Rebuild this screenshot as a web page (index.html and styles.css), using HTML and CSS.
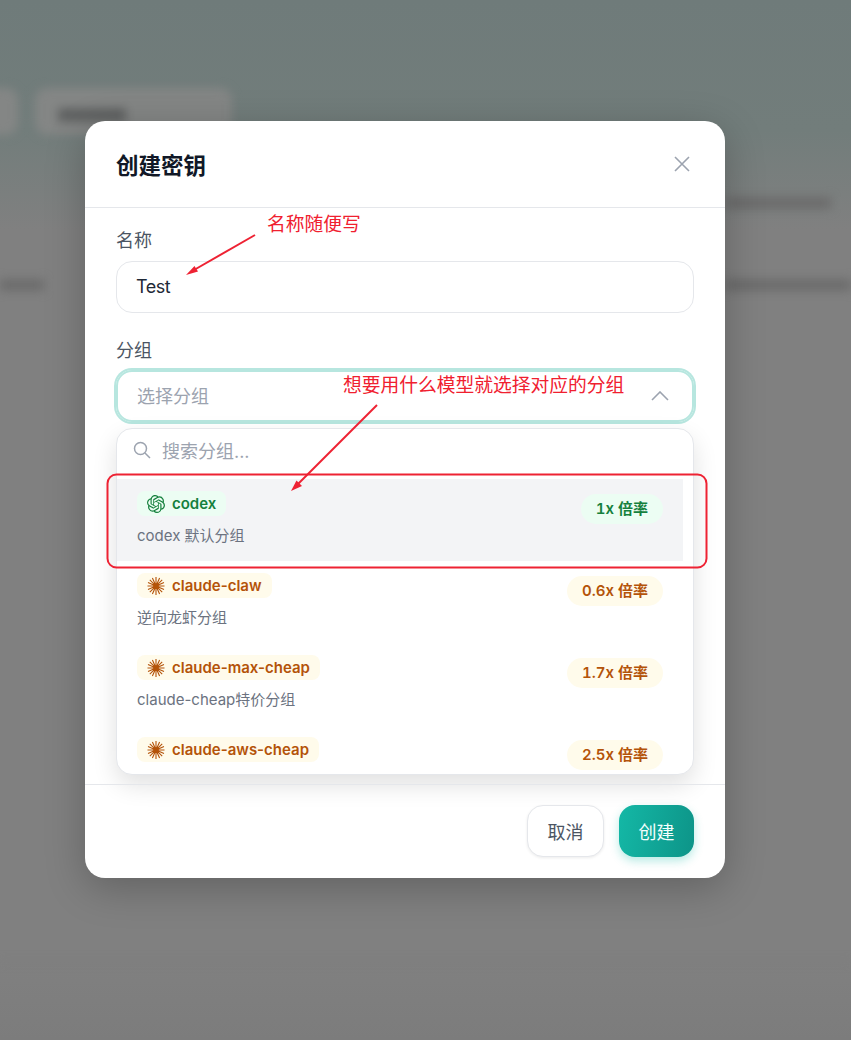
FILE: index.html
```html
<!DOCTYPE html>
<html>
	<head>
		<meta charset="utf-8" />
		<title>创建密钥</title>
		<link rel="stylesheet" href="styles.css">
	</head>
	<body>
		<div class="backdrop">
			<div class="back-toolbar">
				<div class="back-pill back-pill-small"></div>
				<div class="back-pill back-pill-large"><span class="back-text"></span></div>
			</div>
			<div class="back-row back-row-one"><span class="back-line"></span></div>
			<div class="back-row back-row-two"><span class="back-line back-line-left"></span><span class="back-line back-line-right"></span></div>
			<div class="back-foot"></div>
		</div>

		<div class="overlay">
			<div class="modal">
				<div class="modal-head">
					<h2 class="modal-title">创建密钥</h2>
					<svg class="close-icon" viewBox="0 0 18 18"><path d="M2 2l14 14M16 2L2 16"/></svg>
				</div>
				<div class="modal-body">
					<div class="label label-first">名称</div>
					<div class="input">Test</div>
					<div class="label label-second">分组</div>
					<div class="select">
						<span>选择分组</span>
						<svg class="chevron" viewBox="0 0 18 10"><path d="M1 9l8-8 8 8"/></svg>
					</div>
					<div class="dropdown">
						<div class="search">
							<svg class="search-icon" viewBox="0 0 18 18"><circle cx="7.5" cy="7.5" r="6"/><path d="M12 12l5 5"/></svg>
							<span>搜索分组...</span>
						</div>
						<div class="item item-active">
							<div class="item-row">
								<span class="badge badge-green">
									<svg class="badge-icon" viewBox="0 0 24 24"><path fill="currentColor" d="M22.2819 9.8211a5.9847 5.9847 0 0 0-.5157-4.9108 6.0462 6.0462 0 0 0-6.5098-2.9A6.0651 6.0651 0 0 0 4.9807 4.1818a5.9847 5.9847 0 0 0-3.9977 2.9 6.0462 6.0462 0 0 0 .7427 7.0966 5.98 5.98 0 0 0 .511 4.9107 6.051 6.051 0 0 0 6.5146 2.9001A5.9847 5.9847 0 0 0 13.2599 24a6.0557 6.0557 0 0 0 5.7718-4.2058 5.9894 5.9894 0 0 0 3.9977-2.9001 6.0557 6.0557 0 0 0-.7475-7.0729zm-9.022 12.6081a4.4755 4.4755 0 0 1-2.8764-1.0408l.1419-.0804 4.7783-2.7582a.7948.7948 0 0 0 .3927-.6813v-6.7369l2.02 1.1686a.071.071 0 0 1 .038.052v5.5826a4.504 4.504 0 0 1-4.4945 4.4944zm-9.6607-4.1254a4.4708 4.4708 0 0 1-.5346-3.0137l.142.0852 4.783 2.7582a.7712.7712 0 0 0 .7806 0l5.8428-3.3685v2.3324a.0804.0804 0 0 1-.0332.0615L9.74 19.9502a4.4992 4.4992 0 0 1-6.1408-1.6464zM2.3408 7.8956a4.485 4.485 0 0 1 2.3655-1.9728V11.6a.7664.7664 0 0 0 .3879.6765l5.8144 3.3543-2.0201 1.1685a.0757.0757 0 0 1-.071 0l-4.8303-2.7865A4.504 4.504 0 0 1 2.3408 7.872zm16.5963 3.8558L13.1038 8.364 15.1192 7.2a.0757.0757 0 0 1 .071 0l4.8303 2.7913a4.4944 4.4944 0 0 1-.6765 8.1042v-5.6772a.79.79 0 0 0-.407-.667zm2.0107-3.0231l-.142-.0852-4.7735-2.7818a.7759.7759 0 0 0-.7854 0L9.409 9.2297V6.8974a.0662.0662 0 0 1 .0284-.0615l4.8303-2.7866a4.4992 4.4992 0 0 1 6.6802 4.66zM8.3065 12.863l-2.02-1.1638a.0804.0804 0 0 1-.038-.0567V6.0742a4.4992 4.4992 0 0 1 7.3757-3.4537l-.142.0805L8.704 5.459a.7948.7948 0 0 0-.3927.6813zm1.0976-2.3654l2.602-1.4998 2.6069 1.4998v2.9994l-2.5974 1.4997-2.6067-1.4997Z"/></svg>
									codex
								</span>
								<span class="rate rate-green">1x 倍率</span>
							</div>
							<div class="desc">codex 默认分组</div>
						</div>
						<div class="item">
							<div class="item-row">
								<span class="badge badge-orange">
									<svg class="badge-icon burst" viewBox="0 0 18 18"><path d="M9 0v18M0.500 9h17M2.800 2.800l12.400 12.400M15.200 2.800L2.800 15.200M5.400 1l7.200 16M12.600 1L5.400 17M1 5.600l16 6.800M17 5.600L1 12.400"/></svg>
									claude-claw
								</span>
								<span class="rate rate-orange">0.6x 倍率</span>
							</div>
							<div class="desc">逆向龙虾分组</div>
						</div>
						<div class="item">
							<div class="item-row">
								<span class="badge badge-orange">
									<svg class="badge-icon burst" viewBox="0 0 18 18"><path d="M9 0v18M0.500 9h17M2.800 2.800l12.400 12.400M15.200 2.800L2.800 15.200M5.400 1l7.200 16M12.600 1L5.400 17M1 5.600l16 6.800M17 5.600L1 12.400"/></svg>
									claude-max-cheap
								</span>
								<span class="rate rate-orange">1.7x 倍率</span>
							</div>
							<div class="desc">claude-cheap特价分组</div>
						</div>
						<div class="item">
							<div class="item-row">
								<span class="badge badge-orange">
									<svg class="badge-icon burst" viewBox="0 0 18 18"><path d="M9 0v18M0.500 9h17M2.800 2.800l12.400 12.400M15.200 2.800L2.800 15.200M5.400 1l7.200 16M12.600 1L5.400 17M1 5.600l16 6.800M17 5.600L1 12.400"/></svg>
									claude-aws-cheap
								</span>
								<span class="rate rate-orange">2.5x 倍率</span>
							</div>
						</div>
					</div>
				</div>
				<div class="modal-foot">
					<div class="btn btn-cancel">取消</div>
					<div class="btn btn-create">创建</div>
				</div>
			</div>
		</div>

		<!-- red marks drawn on top of the screenshot -->
		<svg class="marks" viewBox="0 0 851 1040">
			<rect class="mark-box" x="107.5" y="474.5" width="599" height="93" rx="9"/>
			<path class="mark-line" d="M255 235L194 270"/>
			<path class="mark-head" d="M186 275l12-3.500-3.500-5.500z"/>
			<path class="mark-line" d="M377 405L298 484"/>
			<path class="mark-head" d="M291 491l11-5-5.500-5.500z"/>
		</svg>
		<div class="note note-name">名称随便写</div>
		<div class="note note-group">想要用什么模型就选择对应的分组</div>
	</body>
</html>
```

FILE: styles.css
```css
*{
	box-sizing: border-box;
}
html,body{
	margin:0;
	height:100%;
}
body{
	position: relative;
	width:851px;
	height:1040px;
	overflow: hidden;
	background: linear-gradient(#6f7b7a 0,#727d7b 130px,#808080 230px,#808080 960px,#7c7c7c 1040px);
	font-family: "Inter","Noto Sans CJK SC",sans-serif;
	color:#111827;
}

/* blurred page behind the dialog */
.backdrop{
	position: absolute;
	top:0;
	left:0;
	width:851px;
	height:1040px;
	filter: blur(5px);
}
.back-toolbar{
	display: flex;
	gap:17px;
	padding-top:88px;
	margin-left:-20px;
}
.back-pill{
	height:47px;
	border-radius:12px;
	background-color:#848685;
}
.back-pill-small{
	width:38px;
}
.back-pill-large{
	width:197px;
	padding:20px 0 0 23px;
}
.back-text{
	display:block;
	width:68px;
	height:14px;
	background-color:#606262;
}
.back-row{
	display: flex;
	justify-content: space-between;
}
.back-row-one{
	justify-content: flex-end;
	padding:62px 20px 0 0;
}
.back-row-two{
	padding-top:70px;
}
.back-line{
	display:block;
	width:105px;
	height:12px;
	background-color:#6c6c6c;
}
.back-line-left{
	width:44px;
}
.back-line-right{
	width:126px;
}
.back-foot{
	height:1px;
	margin-top:670px;
	background-color:#767676;
}

/* dialog */
.overlay{
	position: absolute;
	top:0;
	left:0;
	width:851px;
	padding:121px 0 0 85px;
}
.modal{
	width:640px;
	height:757px;
	background-color:#fff;
	border-radius:20px;
	box-shadow: 0 10px 40px rgba(0,0,0,0.24);
	display: flex;
	flex-direction: column;
}
.modal-head{
	height:87px;
	padding:0 34px 0 31px;
	border-bottom:1px solid #e5e7eb;
	display: flex;
	align-items: center;
	justify-content: space-between;
}
.modal-title{
	margin:0;
	font-size:22.5px;
	font-weight:700;
	color:#111827;
}
.close-icon{
	width:18px;
	height:18px;
	fill:none;
	stroke:#9ca3af;
	stroke-width:1.6;
}
.modal-body{
	flex:1;
	padding:20px 31px 0;
}
.label{
	height:26px;
	line-height:26px;
	font-size:18px;
	color:#4b5563;
}
.label-first{
	margin-bottom:7px;
}
.label-second{
	margin-top:25px;
	margin-bottom:6px;
}
.input{
	height:52px;
	padding:0 19px;
	line-height:50px;
	font-size:18px;
	letter-spacing:-0.5px;
	color:#1f2937;
	border:1px solid #e5e7eb;
	border-radius:16px;
}
.select{
	height:52px;
	padding:0 23px 2px 19px;
	font-size:18px;
	color:#9ca3af;
	border:2px solid #b7e6df;
	border-radius:16px;
	box-shadow: 0 0 0 2px #b7e6df;
	display: flex;
	align-items: center;
	justify-content: space-between;
}
.chevron{
	width:18px;
	height:10px;
	margin-top:2px;
	fill:none;
	stroke:#9ca3af;
	stroke-width:1.6;
}
.dropdown{
	height:347px;
	margin-top:6px;
	border:1px solid #e5e7eb;
	border-radius:16px;
	background-color:#fff;
	box-shadow: 0 10px 24px rgba(0,0,0,0.12);
	overflow: hidden;
}
.search{
	height:50px;
	padding:0 16px 8px;
	display: flex;
	align-items: center;
	gap:11px;
	font-size:18px;
	color:#9ca3af;
}
.search-icon{
	width:18px;
	height:18px;
	fill:none;
	stroke:#9ca3af;
	stroke-width:1.5;
}
.item{
	width:566px;
	height:82px;
	padding:12px 20px 0;
}
.item-active{
	background-color:#f3f4f6;
}
.item-row{
	display: flex;
	justify-content: space-between;
	align-items: flex-start;
}
.badge{
	height:25px;
	padding:0 10px;
	border-radius:8px;
	display: flex;
	align-items: center;
	gap:7px;
	font-size:15px;
	font-weight:600;
}
.badge-green{
	background-color:#ecfdf3;
	color:#15803d;
}
.badge-orange{
	background-color:#fffbeb;
	color:#b45309;
}
.badge-icon{
	width:18px;
	height:18px;
	flex-shrink:0;
}
.burst{
	fill:none;
	stroke:currentColor;
	stroke-width:1.1;
}
.rate{
	height:30px;
	margin-top:3px;
	padding:0 15px;
	line-height:30px;
	border-radius:15px;
	font-size:15px;
	font-weight:600;
	font-variant-numeric: tabular-nums;
}
.rate-green{
	background-color:#ecfdf3;
	color:#15803d;
}
.rate-orange{
	background-color:#fffbeb;
	color:#b45309;
}
.desc{
	line-height:24px;
	font-size:15px;
	color:#6b7280;
}
.modal-foot{
	height:94px;
	padding:20px 31px 0 0;
	border-top:1px solid #e5e7eb;
	display: flex;
	justify-content: flex-end;
	gap:15px;
}
.btn{
	height:52px;
	line-height:55px;
	text-align: center;
	font-size:18px;
	border-radius:16px;
}
.btn-cancel{
	width:77px;
	line-height:53px;
	color:#4b5563;
	background-color:#fff;
	border:1px solid #e5e7eb;
	box-shadow: 0 1px 3px rgba(0,0,0,0.08);
}
.btn-create{
	width:75px;
	color:#f4fffd;
	background: linear-gradient(100deg,#14b8a6,#0d9488);
	box-shadow: 0 4px 10px rgba(20,184,166,0.3);
}

/* annotations */
.marks{
	position: absolute;
	top:0;
	left:0;
	width:851px;
	height:1040px;
}
.mark-box{
	fill:none;
	stroke:#ee2233;
	stroke-width:2;
}
.mark-line{
	fill:none;
	stroke:#ee2233;
	stroke-width:2;
}
.mark-head{
	fill:#ee2233;
}
.note{
	position: absolute;
	font-size:18.75px;
	line-height:24px;
	color:#f0202f;
	white-space: nowrap;
}
.note-name{
	left:267px;
	top:213px;
}
.note-group{
	left:343px;
	top:374px;
}
```
